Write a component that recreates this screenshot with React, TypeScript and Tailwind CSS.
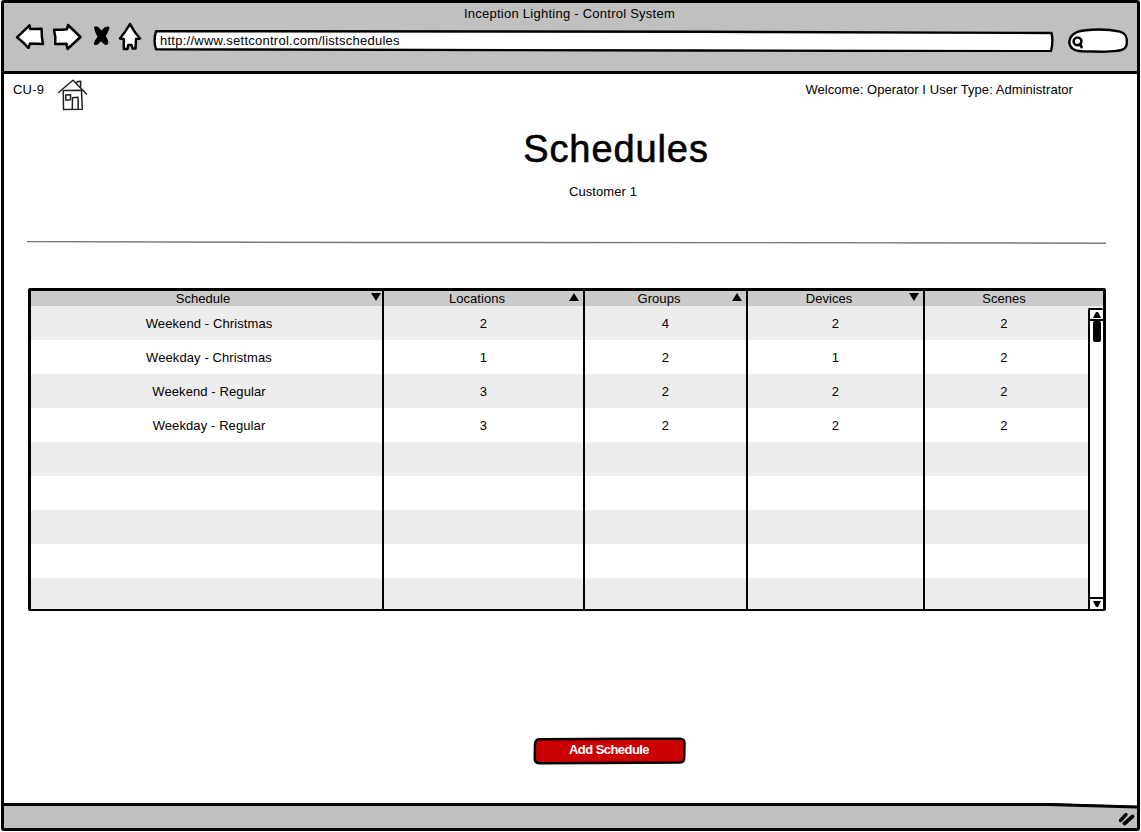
import React from "react";

type Sort = "up" | "down" | null;

const columns: { label: string; sort: Sort; arrow: string; head: string; cell: string }[] = [
  { label: "Schedule", sort: "down", arrow: "right-px", head: "border-r-2 pr-[7px]", cell: "border-r-2 pl-[5px]" },
  { label: "Locations", sort: "up", arrow: "right-[4px]", head: "border-r-2 pr-[13px]", cell: "border-r-2" },
  { label: "Groups", sort: "up", arrow: "right-[4px]", head: "border-r-2 pr-[13px]", cell: "border-r-2" },
  { label: "Devices", sort: "down", arrow: "right-[4px]", head: "border-r-2 pr-[13px]", cell: "border-r-2" },
  { label: "Scenes", sort: null, arrow: "", head: "pr-[20px]", cell: "pr-[5px]" },
];

const rows: string[][] = [
  ["Weekend - Christmas", "2", "4", "2", "2"],
  ["Weekday - Christmas", "1", "2", "1", "2"],
  ["Weekend - Regular", "3", "2", "2", "2"],
  ["Weekday - Regular", "3", "2", "2", "2"],
  ["", "", "", "", ""],
  ["", "", "", "", ""],
  ["", "", "", "", ""],
  ["", "", "", "", ""],
  ["", "", "", "", ""],
];

function NavIcons() {
  return (
    <svg
      className="shrink-0"
      width="130"
      height="32"
      viewBox="14 20 130 32"
      fill="white"
      stroke="black"
      strokeWidth="2.5"
      strokeLinejoin="round"
      strokeLinecap="round"
    >
      <path d="M17 37.3 L29.5 25.3 L30.2 29 L41.6 28.8 Q41.5 37 43 44 L30 43.5 L28.5 47.8 Q23 42 17 37.3 Z" />
      <path d="M54 29.8 Q61 30 67 29.2 L68 25 L80.5 37 L67.5 49 L66.5 43.8 L55.2 44 Q56 37 54 29.8 Z" />
      <path
        d="M94.8 27.2 Q98 25.4 101.3 31.2 Q105 26 109 27.2 Q109.5 29 105.3 36 Q109 42 107.4 44.2 Q104.5 45.6 101 40.5 Q97.5 45.8 94.4 44.4 Q93.6 42.5 98 36.8 Q94 29.5 94.8 27.2 Z"
        fill="black"
        strokeWidth="0.9"
      />
      <path d="M130 24 Q134 32 140 38.5 L136 39 L135.5 48.5 L132.5 48.5 L131.5 45 L128.3 45 L127.5 49 L123.8 49 L123.8 39 L120 38.5 Q126 31 130 24 Z" />
    </svg>
  );
}

function HouseIcon() {
  return (
    <svg
      width="32"
      height="32"
      viewBox="57 79 32 32"
      fill="none"
      stroke="#222"
      strokeWidth="1.5"
      strokeLinecap="round"
      strokeLinejoin="round"
    >
      <path d="M58.5 92.5 L73 80.3 L86.5 94" />
      <path d="M63.2 90.5 L82 90.3 M63.3 90.5 L63.5 109.5 L82.3 109.2 L81.5 90.5" />
      <path d="M76.3 82.8 L77.5 81.6 L80.7 81.2 L80.5 87.5" />
      <path d="M65.7 95 L70.6 94.7 L70.5 99.8 L65.9 100.2 Z" />
      <path d="M72.3 108.5 L72.5 97.8 L78 97.3 L78.2 108.5" />
    </svg>
  );
}

function SearchBox() {
  return (
    <svg className="shrink-0" width="62" height="28" viewBox="1067 27 62 28" fill="none" stroke="black">
      <path
        d="M1069.3 42 C1070 34 1076 31 1086 30.2 C1097 29 1110 29.5 1120 31.7 C1126 33.5 1127.3 37 1126.8 43 C1126.5 50 1121 51 1110 51.4 C1101 52.3 1094 51.3 1082 51.3 C1074 51 1069.5 48 1069.3 42 Z"
        fill="white"
        strokeWidth="2.4"
      />
      <circle cx="1077.5" cy="41.3" r="3.9" strokeWidth="2.5" />
      <path d="M1080 44 L1081.5 47" strokeWidth="2.8" strokeLinecap="round" />
    </svg>
  );
}

function Arrow({ dir, place }: { dir: "up" | "down"; place: string }) {
  return (
    <svg className={"absolute top-[2px] " + place} width="10" height="8" viewBox="0 0 10 8">
      <path d={dir === "up" ? "M0 8 L5 0 L10 8 Z" : "M0 0 L10 0 L5 8 Z"} />
    </svg>
  );
}

function AddressBar() {
  return (
    <div className="relative flex h-[22px] w-[902px] items-center pl-[8px]">
      <svg className="absolute inset-0" width="902" height="22" viewBox="152 30 902 22">
        <path
          d="M156 31.2 L700 31.7 L1051.5 33 Q1053.5 41 1051 51.2 L700 50.5 L156 49.3 Q153.2 41 156 31.2 Z"
          fill="white"
          stroke="black"
          strokeWidth="2.4"
          strokeLinejoin="round"
        />
      </svg>
      <span className="relative tracking-[0.25px]">http://www.settcontrol.com/listschedules</span>
    </div>
  );
}

function Scrollbar() {
  return (
    <div className="flex w-[15px] flex-col bg-[#ededed] pt-[2px]">
      <div className="flex grow flex-col items-center rounded-t-[2px] border-l-2 border-t-2 border-black bg-white">
        <div className="flex h-[11px] w-full items-center justify-center border-b-2 border-black">
          <svg width="8" height="6" viewBox="0 0 8 6">
            <path d="M0 6 L3 0 L5 0 L8 6 Z" />
          </svg>
        </div>
        <div className="h-[21px] w-[8px] rounded-[2px] bg-black" />
        <div className="grow" />
        <div className="flex h-[12px] w-full items-center justify-center border-t-2 border-black">
          <svg width="8" height="6" viewBox="0 0 8 6">
            <path d="M0 0 L8 0 L5 6 L3 6 Z" />
          </svg>
        </div>
      </div>
    </div>
  );
}

function ScheduleTable() {
  return (
    <div className="ml-[24px] mt-[43px] flex h-[323px] w-[1078px] flex-col rounded-[2px] border-[3px] border-b-2 border-black">
      <div className="grid h-[15px] shrink-0 grid-cols-[353px_201px_163px_177px_178px] bg-[#cbcbcb]">
        {columns.map((c) => (
          <div key={c.label} className={"relative border-black text-center leading-[15px] tracking-[0.05px] " + c.head}>
            {c.label}
            {c.sort && <Arrow dir={c.sort} place={c.arrow} />}
          </div>
        ))}
      </div>
      <div className="flex min-h-0 grow">
        <div className="w-[1057px] overflow-hidden">
          {rows.map((row, i) => (
            <div
              key={i}
              className="grid h-[34px] grid-cols-[353px_201px_163px_177px_163px] odd:bg-[#ededed] even:bg-white"
            >
              {row.map((v, j) => (
                <div
                  key={j}
                  className={"border-black pt-[2px] text-center leading-[32px] tracking-[0.1px] " + columns[j].cell}
                >
                  {v}
                </div>
              ))}
            </div>
          ))}
        </div>
        <Scrollbar />
      </div>
    </div>
  );
}

export default function App() {
  return (
    <div className="h-[832px] w-[1141px] overflow-hidden bg-white pb-px pl-px pr-px font-['Liberation_Sans',sans-serif] text-[13px] text-black">
      <div className="flex h-full flex-col rounded-[3px] border-[3px] border-black bg-white">
        <header className="flex h-[71px] shrink-0 flex-col border-b-[3px] border-black bg-[#c0c0c0]">
          <div className="h-[20px] pr-[2px] pt-px text-center leading-[20px] tracking-[0.25px]">
            Inception Lighting - Control System
          </div>
          <div className="flex items-start pl-[10px]">
            <div className="-mt-[3px]">
              <NavIcons />
            </div>
            <div className="ml-[8px] mt-[7px]">
              <AddressBar />
            </div>
            <div className="ml-[13px] mt-[4px]">
              <SearchBox />
            </div>
          </div>
        </header>

        <main className="flex grow flex-col">
          <div className="flex h-[48px] items-start pl-[9px] pr-[64px] pt-[5px]">
            <span className="w-[44px] pt-[2px] leading-[18px] tracking-[0.2px]">CU-9</span>
            <HouseIcon />
            <span className="ml-auto pt-[2px] leading-[18px] tracking-[0.05px]">
              Welcome: Operator I User Type: Administrator
            </span>
          </div>
          <h1 className="mt-[5px] pl-[91px] text-center text-[38px] leading-[44px] tracking-[0.9px] [-webkit-text-stroke:0.6px_black]">
            Schedules
          </h1>
          <p className="mt-[11px] pl-[65px] text-center leading-[20px] tracking-[0.1px]">Customer 1</p>
          <svg className="ml-[23px] mt-[39px] shrink-0" width="1079" height="4" viewBox="0 0 1079 4">
            <path d="M0 0.6 L350 1.5 L720 1.6 L1079 2.2" fill="none" stroke="#777" strokeWidth="1.4" />
          </svg>
          <ScheduleTable />
          <button className="relative ml-[529px] mt-[126px] h-[28px] w-[154px] font-bold leading-[27px] text-white">
            <svg className="absolute inset-0" width="154" height="28" viewBox="0 0 154 28">
              <path
                d="M6 2.2 L100 1.8 L147 1.8 Q151.5 2 151.5 6 L151.2 21 Q151.2 25.3 147 25.6 L60 25.9 L6 26.2 Q1.6 25.8 1.8 21.5 L2 7 Q2.4 2.5 6 2.2 Z"
                fill="#cc0000"
                stroke="black"
                strokeWidth="2.5"
              />
            </svg>
            <span className="relative -left-px -top-[2px] tracking-[-0.55px]">Add Schedule</span>
          </button>
        </main>

        <footer className="relative flex h-[25px] shrink-0 items-center justify-end border-t-[3px] border-black bg-[#c0c0c0] pr-px">
          <svg className="absolute -top-[3px] right-0" width="90" height="6" viewBox="0 0 90 6">
            <path d="M0 0 L90 0 L90 3 Z" fill="white" />
            <path d="M0 1.5 L90 4" stroke="black" strokeWidth="2.8" />
          </svg>
          <svg className="mt-[3px]" width="18" height="14" viewBox="0 0 18 14" stroke="black" strokeLinecap="round" fill="none">
            <path d="M2.5 8.5 L8 2.5" strokeWidth="3.4" />
            <path d="M6.5 11.5 L14.5 4.5" strokeWidth="3.8" />
          </svg>
        </footer>
      </div>
    </div>
  );
}
